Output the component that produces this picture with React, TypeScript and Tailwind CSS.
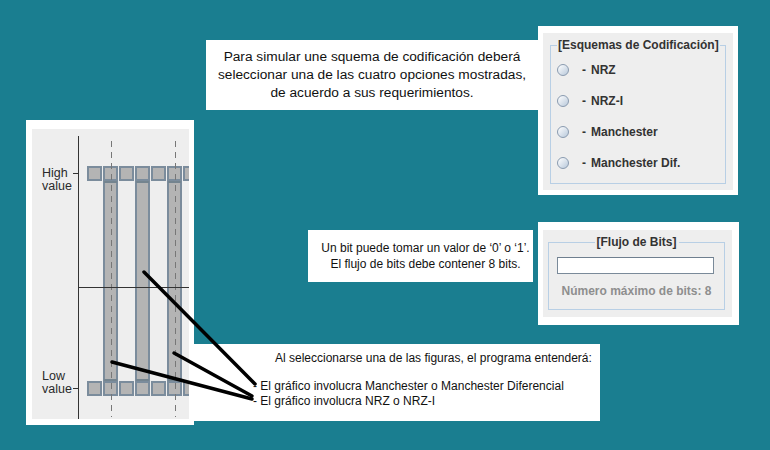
import React from 'react'

const swing = { fontFamily: '"Liberation Sans", Arial, sans-serif' }

function Radio({ label }: { label: string }) {
  return (
    <div className="flex h-[31px] items-center pl-[6px]">
      <span className="h-[12px] w-[12px] rounded-full border border-[#8a9bb0] bg-linear-to-br from-white to-[#b9c9db]" />
      <span className="ml-[13px]">-</span>
      <span className="ml-[5px]">{label}</span>
    </div>
  )
}

function Diagram() {
  const xs = [55, 71, 87, 103, 119, 135, 151]
  const bars = [71, 103, 135]
  return (
    <svg width="157" height="290" viewBox="0 0 157 290" className="block">
      {/* bars */}
      {bars.map((x) => (
        <rect key={'b' + x} x={x + 1} y={51} width={13} height={202} fill="#b4b4b4" stroke="#7b8c9c" strokeWidth="2" />
      ))}
      {/* squares */}
      {xs.map((x) => (
        <g key={x}>
          <rect x={x + 1} y={38} width={13} height={13} fill="#b4b4b4" stroke="#7b8c9c" strokeWidth="2" />
          <rect x={x + 1} y={253} width={13} height={13} fill="#b4b4b4" stroke="#7b8c9c" strokeWidth="2" />
        </g>
      ))}
      {bars.map((x) => (
        <g key={'l' + x}>
          <line x1={x + 1} x2={x + 14} y1={53} y2={53} stroke="#74848f" strokeWidth="2" />
          <line x1={x + 1} x2={x + 14} y1={251} y2={251} stroke="#74848f" strokeWidth="2" />
        </g>
      ))}
      {/* dashed guides */}
      <line x1={79.5} x2={79.5} y1={12} y2={288} stroke="#777" strokeWidth="1" strokeDasharray="6 5" />
      <line x1={143.5} x2={143.5} y1={12} y2={288} stroke="#777" strokeWidth="1" strokeDasharray="6 5" />
      {/* axes */}
      <line x1={46.5} x2={46.5} y1={7} y2={290} stroke="#333" strokeWidth="1" />
      <line x1={46} x2={157} y1={158.5} y2={158.5} stroke="#333" strokeWidth="1" />
      <line x1={41} x2={46} y1={44.5} y2={44.5} stroke="#333" strokeWidth="1" />
      <line x1={41} x2={46} y1={259.5} y2={259.5} stroke="#333" strokeWidth="1" />
      <g fontFamily='"Liberation Sans", Arial, sans-serif' fontSize="12.5" fill="#2a2a2a">
        <text x={10} y={48}>High</text>
        <text x={10} y={61}>value</text>
        <text x={10} y={251}>Low</text>
        <text x={10} y={264}>value</text>
      </g>
    </svg>
  )
}

export default function App() {
  return (
    <div className="relative flex h-[450px] w-[770px] items-start overflow-hidden bg-[#1a7e90] text-black" style={swing}>
      {/* diagram panel */}
      <div className="ml-[26px] mt-[120px] h-[305px] w-[168px] bg-white pb-[6px] pl-[6px] pr-[5px] pt-[9px]">
        <div className="h-[290px] w-[157px] bg-[#eeeeee]">
          <Diagram />
        </div>
      </div>

      <div className="flex flex-col">
        {/* row 1 */}
        <div className="mt-[26px] flex items-start">
          <div className="ml-[12px] mt-[14px] flex h-[70px] w-[332px] items-center justify-center bg-white text-center text-[13.7px] leading-[18px] text-[#111]">
            <p>
              Para simular une squema de codificación deberá
              <br />
              seleccionar una de las cuatro opciones mostradas,
              <br />
              de acuerdo a sus requerimientos.
            </p>
          </div>
          <div className="h-[169px] w-[200px] bg-white px-[5px] pb-[5px] pt-[7px]">
            <div className="h-[157px] w-[190px] bg-[#eeeeee] px-[7px] pt-[5px]">
              <fieldset className="h-[146px] border border-[#b8cfe5] text-[12px] font-bold leading-[14px] text-[#333]">
                <legend className="ml-[6px] px-[1px]">[Esquemas de Codificación]</legend>
                <div className="pt-[2px]">
                  <Radio label="NRZ" />
                  <Radio label="NRZ-I" />
                  <Radio label="Manchester" />
                  <Radio label="Manchester Dif." />
                </div>
              </fieldset>
            </div>
          </div>
        </div>

        {/* row 2 */}
        <div className="flex items-start">
          <div className="ml-[114px] mt-[35px] flex h-[52px] w-[225px] items-center justify-center bg-white pl-[10px] text-center text-[12px] leading-[16px] text-[#111]">
            <p>
              Un bit puede tomar un valor de ‘0’ o ‘1’.
              <br />
              El flujo de bits debe contener 8 bits.
            </p>
          </div>
          <div className="ml-[5px] mt-[27px] h-[103px] w-[201px] bg-white pb-[8px] pl-[5px] pr-[7px] pt-[8px]">
            <div className="h-[87px] w-[189px] bg-[#eeeeee] px-[5px] pt-[5px]">
              <fieldset className="h-[75px] w-[177px] border border-[#b8cfe5] text-[12px] font-bold leading-[14px]">
                <legend className="mx-auto px-[2px] text-[#333]">[Flujo de Bits]</legend>
                <div className="ml-[8px] mt-[8px] h-[17px] w-[157px] border border-[#7a8a99] border-t-[#6f7f8f] bg-white" />
                <div className="mt-[10px] text-center text-[#8e8e8e]">Número máximo de bits: 8</div>
              </fieldset>
            </div>
          </div>
        </div>

        {/* row 3 */}
        <div className="mt-[19px] h-[77px] w-[406px] bg-white pt-[6px] text-[12px] text-[#111]">
          <p className="ml-[81px] leading-[16px]">Al seleccionarse una de las figuras, el programa entenderá:</p>
          <div className="mt-[13px] pl-[59px] leading-[15px]">
            <p>- El gráfico involucra Manchester o Manchester Diferencial</p>
            <p>- El gráfico involucra NRZ o NRZ-I</p>
          </div>
        </div>
      </div>

      {/* callout lines */}
      <svg className="pointer-events-none absolute left-0 top-0" width="770" height="450">
        <g stroke="#000" strokeWidth="3.5" strokeLinecap="round">
          <line x1={144} y1={272} x2={255} y2={384} />
          <line x1={174} y1={353} x2={252} y2={396} />
          <line x1={112} y1={362} x2={252} y2={399} />
        </g>
      </svg>
    </div>
  )
}
